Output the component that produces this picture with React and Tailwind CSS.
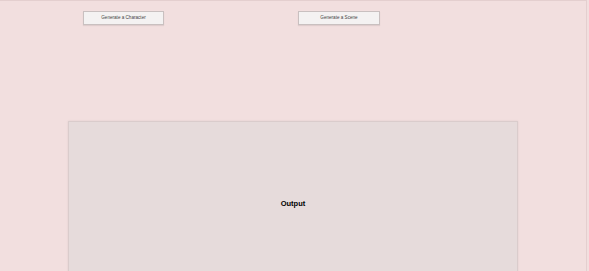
export default function App() {
  return (
    <div className="w-[589px] h-[271px] overflow-hidden bg-[#f2dfdf]" style={{ fontFamily: '"Liberation Sans", Arial, sans-serif' }}>
      <div className="w-[587px] h-[271px] border-t border-r border-[#e4cfcf] box-border">
        <div className="flex pt-[10px] pl-[83px] gap-[134px]">
          <button className="w-[81px] h-[14px] bg-[#f4f2f2] border border-[#c9c0c0] text-[4.6px] text-[#444] flex items-center justify-center shadow-[0_1px_1px_rgba(0,0,0,0.08)]">
            Generate a Character
          </button>
          <button className="w-[82px] h-[14px] bg-[#f4f2f2] border border-[#c9c0c0] text-[4.6px] text-[#444] flex items-center justify-center shadow-[0_1px_1px_rgba(0,0,0,0.08)]">
            Generate a Scene
          </button>
        </div>
        <div className="ml-[68px] mt-[96px] w-[450px] h-[200px] bg-[#e6dbdb] border border-[#dacccc] shadow-[0_0_2px_rgba(0,0,0,0.08)] flex justify-center pt-[78px]">
          <span className="text-[7.5px] font-bold text-black leading-none h-[10px]">Output</span>
        </div>
      </div>
    </div>
  );
}
